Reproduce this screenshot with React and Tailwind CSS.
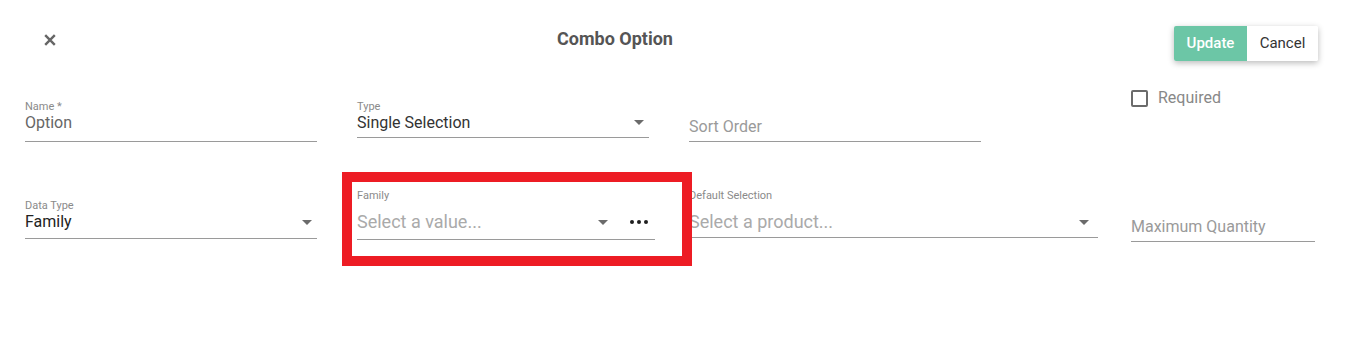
import React from "react";

const Arrow = () => (
  <svg width="10" height="5" viewBox="0 0 10 5" className="shrink-0 block">
    <path d="M0 0 L10 0 L5 5 Z" fill="#6b6b6b" />
  </svg>
);

const Dots = () => (
  <svg width="18" height="4" viewBox="0 0 18 4" className="shrink-0 block">
    <circle cx="2" cy="2" r="2" fill="#1f1f1f" />
    <circle cx="9" cy="2" r="2" fill="#1f1f1f" />
    <circle cx="16" cy="2" r="2" fill="#1f1f1f" />
  </svg>
);

export default function App() {
  return (
    <div
      className="w-[1346px] h-[348px] bg-white overflow-hidden"
      style={{ fontFamily: "Roboto, 'Liberation Sans', sans-serif" }}
    >
      {/* Header */}
      <div className="flex items-start h-[85px]">
        <div className="w-[100px] flex justify-center pt-[34px]">
          <svg width="12" height="12" viewBox="0 0 12 12" className="block">
            <path d="M1.2 1.2 L10.8 10.8 M10.8 1.2 L1.2 10.8" stroke="#666" strokeWidth="2.4" strokeLinecap="butt" />
          </svg>
        </div>
        <div className="flex-1 text-center pt-[29px] text-[18px] leading-[20px] font-bold text-[#555]">
          Combo Option
        </div>
        <div className="w-[216px] pl-[44px] pt-[26px]">
          <div className="flex w-max rounded-[2px] shadow-[0_2px_6px_rgba(0,0,0,0.28)]">
            <button className="h-[35px] w-[73px] bg-[#6cc6a6] text-white text-[15px] font-medium rounded-l-[2px]">
              Update
            </button>
            <button className="h-[35px] w-[71px] bg-white text-[#333] text-[15px] rounded-r-[2px]">
              Cancel
            </button>
          </div>
        </div>
      </div>

      {/* Row 1 */}
      <div className="flex items-start pl-[25px]">
        <div className="w-[292px] mt-[15px] flex flex-col border-b border-[#9a9a9a] pb-[8px]">
          <span className="block text-[11px] leading-[13px] text-[#8a8a8a]">Name *</span>
          <span className="block text-[16px] leading-[20px] text-[#666]">Option</span>
        </div>
        <div className="w-[292px] ml-[40px] mt-[15px] flex flex-col border-b border-[#9a9a9a] pb-[5px]">
          <span className="block text-[11px] leading-[13px] text-[#8a8a8a]">Type</span>
          <div className="flex items-center">
            <span className="block flex-1 text-[16px] leading-[19px] text-[#333]">Single Selection</span>
            <span className="block mr-[5px]"><Arrow /></span>
          </div>
        </div>
        <div className="w-[292px] ml-[40px] mt-[32px] border-b border-[#9a9a9a] pb-[4px]">
          <span className="block text-[16px] leading-[20px] text-[#9a9a9a]">Sort Order</span>
        </div>
        <div className="ml-[150px] mt-[3px] flex items-center">
          <div className="w-[17px] h-[17px] border-2 border-[#6b6b6b] rounded-[2px]" />
          <span className="block ml-[10px] text-[16px] leading-[20px] text-[#888]">Required</span>
        </div>
      </div>

      {/* Row 2 */}
      <div className="flex items-start pl-[25px] mt-[30px]">
        <div className="w-[292px] mt-[27px] flex flex-col border-b border-[#9a9a9a] pb-[6px]">
          <span className="block text-[11px] leading-[13px] text-[#8a8a8a]">Data Type</span>
          <div className="flex items-center">
            <span className="block flex-1 text-[16px] leading-[20px] text-[#222]">Family</span>
            <span className="block mr-[5px]"><Arrow /></span>
          </div>
        </div>
        <div className="relative z-10 ml-[25px] w-[350px] border-[10px] border-[#ed1c24] pl-[5px] pr-[27px] pt-[7px] pb-[16px]">
          <div className="flex flex-col border-b border-[#9a9a9a] pb-[5px]">
            <span className="block text-[11px] leading-[13px] text-[#8a8a8a]">Family</span>
            <div className="flex items-center mt-[8px]">
              <span className="block flex-1 text-[18px] leading-[24px] text-[#aaa]">Select a value...</span>
              <Arrow />
              <span className="block ml-[22px] mr-[7px]"><Dots /></span>
            </div>
          </div>
        </div>
        <div className="w-[409px] ml-[-3px] mt-[17px] flex flex-col border-b border-[#9a9a9a] pb-[3px]">
          <span className="block text-[11px] leading-[13px] text-[#8a8a8a]">Default Selection</span>
          <div className="flex items-center mt-[8px]">
            <span className="block flex-1 text-[18px] leading-[24px] text-[#aaa]">Select a product...</span>
            <span className="block mr-[9px]"><Arrow /></span>
          </div>
        </div>
        <div className="w-[184px] ml-[33px] mt-[45px] border-b border-[#9a9a9a] pb-[4px]">
          <span className="block text-[16px] leading-[20px] text-[#9a9a9a]">Maximum Quantity</span>
        </div>
      </div>
    </div>
  );
}
